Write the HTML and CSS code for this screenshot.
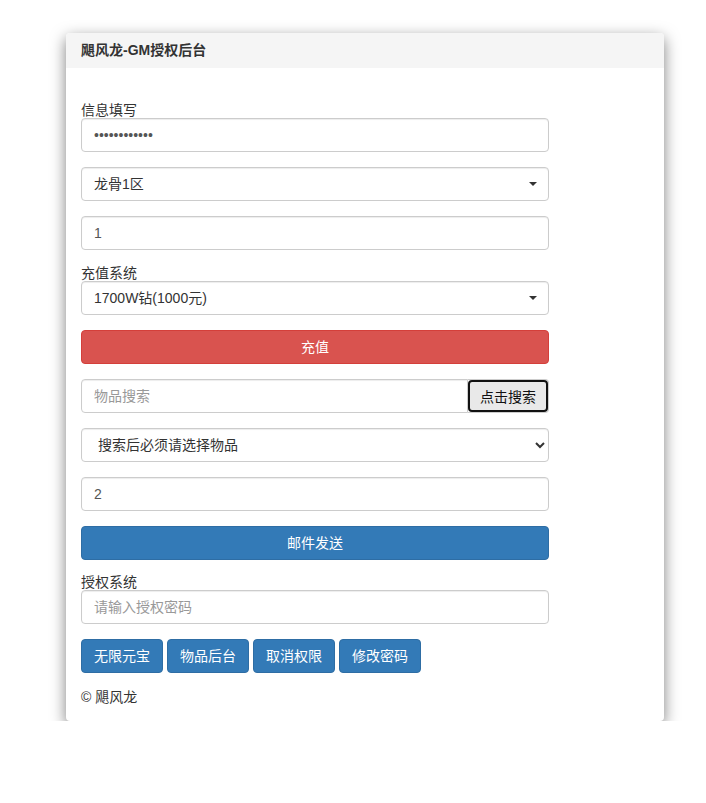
FILE: index.html
```html
<!DOCTYPE html>
<html lang="zh-CN">
  <head>
    <meta charset="UTF-8" />
    <meta name="viewport" content="width=device-width, initial-scale=1.0" />
    <title>飓风龙-GM授权后台</title>
    <link rel="stylesheet" href="styles.css">
  </head>
  <body>
    <div class="panel">
      <div class="panel-heading">飓风龙-GM授权后台</div>

      <div class="panel-body">
        <form class="gm-form" onsubmit="return false;">
          <label class="field-label">信息填写</label>
          <div class="form-group">
            <input type="password" class="form-control" value="123456789012" />
          </div>
          <div class="form-group select-wrap">
            <select class="form-control plain-select">
              <option>龙骨1区</option>
            </select>
          </div>
          <div class="form-group">
            <input type="text" class="form-control" value="1" />
          </div>

          <label class="field-label">充值系统</label>
          <div class="form-group select-wrap">
            <select class="form-control plain-select">
              <option>1700W钻(1000元)</option>
            </select>
          </div>
          <div class="form-group">
            <button class="btn btn-danger btn-block">充值</button>
          </div>

          <div class="form-group input-group">
            <input type="text" class="form-control" placeholder="物品搜索" />
            <span class="input-group-btn">
              <button class="search-btn">点击搜索</button>
            </span>
          </div>
          <div class="form-group">
            <select class="form-control native-select">
              <option>搜索后必须请选择物品</option>
            </select>
          </div>
          <div class="form-group">
            <input type="text" class="form-control" value="2" />
          </div>
          <div class="form-group">
            <button class="btn btn-primary btn-block">邮件发送</button>
          </div>

          <label class="field-label field-label-tight">授权系统</label>
          <div class="form-group">
            <input type="text" class="form-control" placeholder="请输入授权密码" />
          </div>
          <div class="btn-row">
            <button class="btn btn-primary">无限元宝</button>
            <button class="btn btn-primary">物品后台</button>
            <button class="btn btn-primary">取消权限</button>
            <button class="btn btn-primary">修改密码</button>
          </div>
        </form>

        <p class="footer">© 飓风龙</p>
      </div>
    </div>
  </body>
</html>
```

FILE: styles.css
```css
* {
  box-sizing: border-box;
}

body {
  margin: 0;
  font-family: "Liberation Sans", "Noto Sans CJK SC", sans-serif;
  font-size: 14px;
  color: #333;
  background: #fff;
}

.panel {
  width: 598px;
  margin: 33px 0 0 66px;
  background: #fff;
  border-radius: 4px;
  box-shadow: 0 5px 15px rgba(0, 0, 0, 0.5);
}

.panel-heading {
  padding: 10px 15px;
  line-height: 15px;
  font-weight: bold;
  background-color: #f5f5f5;
  border-radius: 4px 4px 0 0;
}

.panel-body {
  padding: 34px 15px 14px;
}

.gm-form {
  width: 468px;
}

.field-label {
  display: block;
  line-height: 16px;
  height: 16px;
}

.field-label-tight {
  height: 15px;
  line-height: 14px;
}

.form-group {
  margin-bottom: 15px;
}

.form-control {
  display: block;
  width: 100%;
  height: 34px;
  padding: 6px 12px;
  font-family: inherit;
  font-size: 14px;
  line-height: 20px;
  color: #555;
  background-color: #fff;
  border: 1px solid #ccc;
  border-radius: 4px;
  box-shadow: inset 0 1px 1px rgba(0, 0, 0, 0.075);
  outline: none;
}

.form-control::placeholder {
  color: #999;
}

.select-wrap {
  position: relative;
}

.plain-select {
  appearance: none;
  -webkit-appearance: none;
  color: #333;
}

.select-wrap::after {
  content: "";
  position: absolute;
  right: 12px;
  top: 15px;
  border-top: 4px solid #333;
  border-left: 4px solid transparent;
  border-right: 4px solid transparent;
}

.native-select {
  color: #333;
}

.btn {
  display: inline-block;
  height: 34px;
  padding: 6px 12px;
  font-family: inherit;
  font-size: 14px;
  line-height: 20px;
  color: #fff;
  border: 1px solid transparent;
  border-radius: 4px;
  cursor: pointer;
}

.btn-block {
  display: block;
  width: 100%;
}

.btn-danger {
  background-color: #d9534f;
  border-color: #d43f3a;
}

.btn-primary {
  background-color: #337ab7;
  border-color: #2e6da4;
}

.input-group {
  display: flex;
}

.input-group .form-control {
  flex: 1;
  border-radius: 4px 0 0 4px;
}

.input-group-btn {
  display: flex;
  width: 81px;
  border: 1px solid #ccc;
  border-left: none;
  border-radius: 0 4px 4px 0;
}

.search-btn {
  width: 100%;
  margin: 0;
  padding: 0;
  font-family: inherit;
  font-size: 14px;
  color: #111;
  background-color: #e9e9e9;
  border: 2px solid #111;
  border-radius: 4px;
}

.btn-row {
  display: flex;
  gap: 4px;
}

.footer {
  margin: 14px 0 0;
  line-height: 20px;
}
```
